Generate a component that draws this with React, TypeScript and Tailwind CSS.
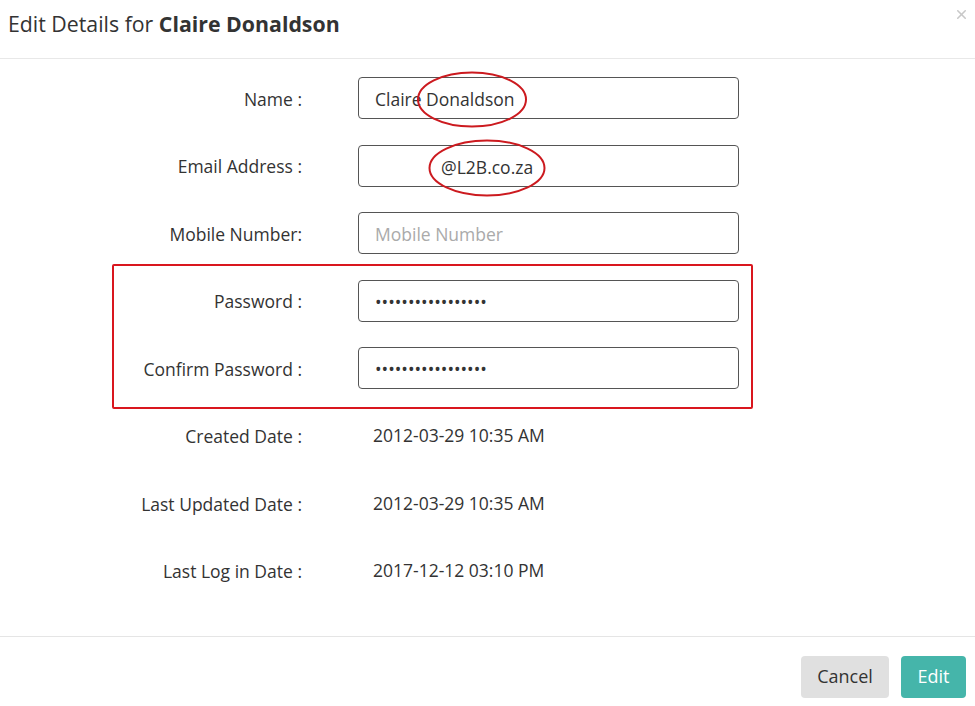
import { X } from 'lucide-react'

const font = { fontFamily: '"Open Sans", "Noto Sans", sans-serif' }

function Row({ label, children }: { label: string; children: React.ReactNode }) {
  return (
    <div className="flex h-[42px] items-center">
      <label className="w-[302px] pt-[2px] text-right text-[17.5px] text-[#333]">{label}</label>
      <div className="ml-[56px] w-[381px]">{children}</div>
    </div>
  )
}

const inputCls =
  'h-[42px] w-full rounded-[4px] border border-[#555] bg-white px-4 pt-[2px] text-[17.5px] text-[#333] placeholder:text-[#aaa] outline-none'

export default function App() {
  return (
    <div className="h-[706px] w-[975px] bg-white text-[#333]" style={font}>
      {/* Header */}
      <div className="relative h-[59px] border-b border-[#e8e8e8] px-2 pt-[9px]">
        <h2 className="text-[21.3px] leading-[29px] text-[#333]">
          Edit Details for <b className="font-bold">Claire Donaldson</b>
        </h2>
        <button className="absolute right-[6px] top-[7px] text-[#c8c8c8]" aria-label="Close">
          <X className="h-[15px] w-[15px]" strokeWidth={2.5} />
        </button>
      </div>

      {/* Body */}
      <div className="relative flex flex-col gap-[25.5px] pb-[44px] pt-[18px]">
        <Row label="Name :">
          <input className={inputCls} defaultValue="Claire Donaldson" />
        </Row>
        <Row label="Email Address :">
          <input className={inputCls + ' pl-[82px]'} defaultValue="@L2B.co.za" />
        </Row>
        <Row label="Mobile Number:">
          <input className={inputCls} placeholder="Mobile Number" />
        </Row>
        <Row label="Password :">
          <input className={inputCls} type="password" defaultValue="aaaaaaaaaaaaaaaaa" />
        </Row>
        <Row label="Confirm Password :">
          <input className={inputCls} type="password" defaultValue="aaaaaaaaaaaaaaaaa" />
        </Row>
        <Row label="Created Date :">
          <span className="pl-[15px] pt-[2px] text-[17.5px]">2012-03-29 10:35 AM</span>
        </Row>
        <Row label="Last Updated Date :">
          <span className="pl-[15px] pt-[2px] text-[17.5px]">2012-03-29 10:35 AM</span>
        </Row>
        <Row label="Last Log in Date :">
          <span className="pl-[15px] pt-[2px] text-[17.5px]">2017-12-12 03:10 PM</span>
        </Row>

        {/* annotation marks */}
        <div className="pointer-events-none absolute left-[112px] top-[205px] h-[145px] w-[641px] rounded-[2px] border-2 border-[#d9161e]" />
        <svg className="pointer-events-none absolute left-0 top-0" width="975" height="200">
          <ellipse cx="472" cy="40.5" rx="54" ry="27" fill="none" stroke="#cc1a1f" strokeWidth="2" />
          <ellipse cx="487" cy="109" rx="57.5" ry="27.5" fill="none" stroke="#cc1a1f" strokeWidth="2" />
        </svg>
      </div>

      {/* Footer */}
      <div className="flex justify-end gap-3 border-t border-[#e5e5e5] pr-[9px] pt-[19px]">
        <button className="h-[42px] w-[88px] rounded-[4px] bg-[#e0e0e0] text-[18px] text-[#333]">Cancel</button>
        <button className="h-[42px] w-[65px] rounded-[4px] bg-[#45b5aa] text-[18px] text-white">Edit</button>
      </div>
    </div>
  )
}
